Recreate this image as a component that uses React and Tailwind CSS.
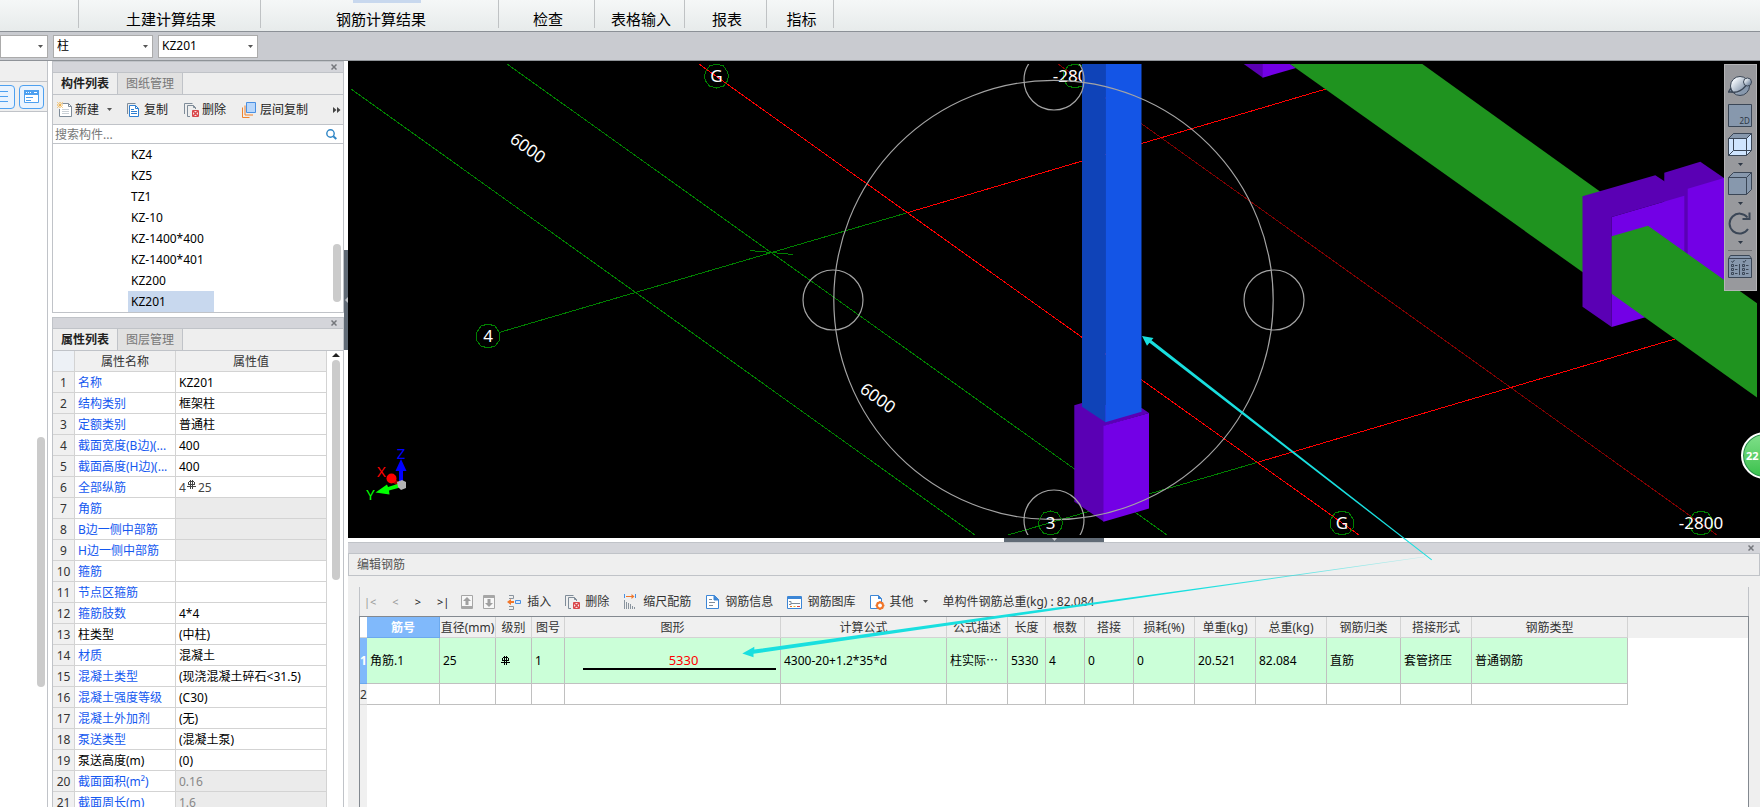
// Rebar takeoff workspace: ribbon, component/property panels, 3D view and rebar editor

const ribbonTabs = [
  { label: '土建计算结果', width: 'w-[182px]' },
  { label: '钢筋计算结果', width: 'w-[238px]', active: true },
  { label: '检查', width: 'w-24' },
  { label: '表格输入', width: 'w-[90px]' },
  { label: '报表', width: 'w-[82px]' },
  { label: '指标', width: 'w-[67px]' },
];

const components = ['KZ4', 'KZ5', 'TZ1', 'KZ-10', 'KZ-1400*400', 'KZ-1400*401', 'KZ200', 'KZ201'];

const properties = [
  { name: '名称', value: 'KZ201' },
  { name: '结构类别', value: '框架柱' },
  { name: '定额类别', value: '普通柱' },
  { name: '截面宽度(B边)(...', value: '400' },
  { name: '截面高度(H边)(...', value: '400' },
  { name: '全部纵筋', value: <span className="text-[#444]">4<RebarMark className="mx-px inline-block -translate-y-1" />25</span> },
  { name: '角筋', disabled: true },
  { name: 'B边一侧中部筋', disabled: true },
  { name: 'H边一侧中部筋', disabled: true },
  { name: '箍筋' },
  { name: '节点区箍筋' },
  { name: '箍筋肢数', value: '4*4' },
  { name: '柱类型', value: '(中柱)', plain: true },
  { name: '材质', value: '混凝土' },
  { name: '混凝土类型', value: '(现浇混凝土碎石<31.5)' },
  { name: '混凝土强度等级', value: '(C30)' },
  { name: '混凝土外加剂', value: '(无)' },
  { name: '泵送类型', value: '(混凝土泵)' },
  { name: '泵送高度(m)', value: '(0)', plain: true },
  { name: '截面面积(m²)', value: '0.16', disabled: true },
  { name: '截面周长(m)', value: '1.6', disabled: true },
];

const columns = [
  { title: '筋号', width: 'w-[73px]', value: '角筋.1', current: true },
  { title: '直径(mm)', width: 'w-14', value: '25' },
  { title: '级别', width: 'w-9', value: <RebarMark className="ml-0.5" /> },
  { title: '图号', width: 'w-[33px]', value: '1' },
  { title: '图形', width: 'w-[216px]', value: <BarShape length="5330" /> },
  { title: '计算公式', width: 'w-[166px]', value: '4300-20+1.2*35*d' },
  { title: '公式描述', width: 'w-[61px]', value: '柱实际⋯' },
  { title: '长度', width: 'w-[38px]', value: '5330' },
  { title: '根数', width: 'w-[39px]', value: '4' },
  { title: '搭接', width: 'w-[49px]', value: '0' },
  { title: '损耗(%)', width: 'w-[61px]', value: '0' },
  { title: '单重(kg)', width: 'w-[61px]', value: '20.521' },
  { title: '总重(kg)', width: 'w-[71px]', value: '82.084' },
  { title: '钢筋归类', width: 'w-[74px]', value: '直筋' },
  { title: '搭接形式', width: 'w-[71px]', value: '套管挤压' },
  { title: '钢筋类型', width: 'w-[156px]', value: '普通钢筋' },
];

function Caret({ className = '' }) {
  return (
    <svg width="5" height="3" viewBox="0 0 5 3" className={className} aria-hidden="true">
      <path d="M0 0h5L2.5 3z" fill="currentColor" />
    </svg>
  );
}

// HRB400 rebar grade sign
function RebarMark({ className = '' }) {
  return (
    <svg width="10" height="9" viewBox="0 0 10 9" fill="none" stroke="currentColor" className={className} aria-hidden="true">
      <path d="M2 1.5h5M1.500 2v3M7.500 2v3M2 4.500h5M3.500 0v9M5.500 0v9M0 6.500h9" />
    </svg>
  );
}

function BarShape({ length }) {
  return (
    <div className="pr-px pl-[15px] text-center text-[13px] leading-4 text-[#f00]">
      <span className="pl-2">{length}</span>
      <div className="h-0.5 bg-black" />
    </div>
  );
}

function NewIcon() {
  return (
    <svg width="16" height="16" viewBox="0 0 16 16" fill="none" aria-hidden="true">
      <path d="M5.5 1.5h6l3 3v10h-12V7" fill="#fff" stroke="#7f8c99" />
      <path d="M11.5 1.5v3h3" stroke="#7f8c99" />
      <path d="M5 7.5h7M5 9.5h7M5 11.5h7" stroke="#c9d0d6" />
      <path d="M3 0v6M0 3h6M.5.5l5 5M5.5.5l-5 5" stroke="#f5a623" strokeDasharray="1 .6" />
    </svg>
  );
}

function CopyIcon() {
  return (
    <svg width="16" height="16" viewBox="0 0 16 16" fill="none" stroke="#2f7fd1" aria-hidden="true">
      <path d="M1.5 12V1.5h8" stroke="#7f8c99" />
      <path d="M3.5 3.5h6l3 3v8h-9z" fill="#fff" />
      <path d="M9.5 3.500v3h3M5 7.500h3M5 9.500h6M5 11.500h6" />
    </svg>
  );
}

function DeleteIcon() {
  return (
    <svg width="16" height="16" viewBox="0 0 16 16" fill="none" stroke="#7f8c99" aria-hidden="true">
      <path d="M.5 12V1.5h8" />
      <path d="M6 14.5H3.5v-11h6l2 2V7" />
      <path d="M9.5 3.5v2h2" />
      <path d="M8.5 8.5h6v6h-6z" fill="#fbe3e3" stroke="#d9474b" />
      <path d="M9 9l5 5M14 9l-5 5" stroke="#d9474b" strokeWidth="1.5" />
    </svg>
  );
}

function LayerIcon() {
  return (
    <svg width="16" height="16" viewBox="0 0 16 16" fill="none" aria-hidden="true">
      <path d="M.5 5.5v10h7" stroke="#f0822d" />
      <path d="M3 3.5v9.500h8" stroke="#f0822d" />
      <path d="M4.500.5h9v10h-9z" fill="#b9d7fb" stroke="#4a90e2" />
    </svg>
  );
}

function InsertIcon() {
  return (
    <svg width="16" height="16" viewBox="0 0 16 16" fill="none" aria-hidden="true">
      <path d="M2 1.5h4.500v3H2M2 15.500h4.500v-3H2" stroke="#8a949e" />
      <path d="M0 8l4-3v2h3v2H4v2z" fill="#f0762b" />
      <path d="M8.500 6.500h5v3h-5z" stroke="#4a90e2" fill="#d9e9fb" />
    </svg>
  );
}

function ScaleIcon() {
  return (
    <svg width="16" height="16" viewBox="0 0 16 16" fill="none" aria-hidden="true">
      <path d="M1.5 0v4M12.5 0v4" stroke="#4a90e2" />
      <path d="M3 2.500h6" stroke="#f0762b" />
      <path d="M8.500 0l3 2.500-3 2.500z" fill="#f0762b" />
      <path d="M1.500 6v9M3.500 8v7M5.500 9v6M7.500 10v5M9.500 12v3M11.500 13v2" stroke="#8a949e" />
    </svg>
  );
}

function InfoIcon() {
  return (
    <svg width="16" height="16" viewBox="0 0 16 16" fill="none" stroke="#3c86d6" aria-hidden="true">
      <path d="M1.5 1.500h8l4 4v9h-12z" fill="#fff" />
      <path d="M9 1.500l4.500 4.500H9z" fill="#3c86d6" />
      <path d="M4 5.500h3M4 8.500h6M4 11.500h4" stroke="#7f8c99" />
    </svg>
  );
}

function LibraryIcon() {
  return (
    <svg width="16" height="16" viewBox="0 0 16 16" fill="none" aria-hidden="true">
      <path d="M.5 2.500h14v12H.5z" fill="#fff" stroke="#3c86d6" />
      <path d="M1 2h13v3H1z" fill="#3c86d6" />
      <path d="M2 7.500h2v3H2M4 9.500h9" stroke="#7f8c99" />
      <path d="M3 12.500h2" stroke="#f0762b" />
      <path d="M6.500 12.500h2" stroke="#e8b321" />
      <path d="M10 12.500h3" stroke="#d9474b" />
    </svg>
  );
}

function OtherIcon() {
  return (
    <svg width="16" height="16" viewBox="0 0 16 16" fill="none" aria-hidden="true">
      <path d="M1.500 1.500h8l3 3v10h-11z" fill="#fff" stroke="#3c86d6" />
      <path d="M9 1l4 4H9z" fill="#3c86d6" />
      <circle cx="11" cy="11.500" r="3" stroke="#f0762b" strokeWidth="2" fill="#fff" />
      <path d="M11 7v2M11 14v2M6.500 11.500h2M13.500 11.500h2M8 8.500l1.500 1.500M14 8.500l-1.500 1.500M8 14.500l1.500-1.500M14 14.500L12.500 13" stroke="#f0762b" strokeWidth="1.5" />
    </svg>
  );
}

function ArrowBoxIcon({ down = false }) {
  return (
    <svg width="12" height="14" viewBox="0 0 12 14" fill="none" className="block" aria-hidden="true">
      <path d="M.5.5h11v13H.5z" stroke="#a6a6a6" fill="#f7f7f7" />
      <path d={down ? 'M1 2h10' : 'M1 12h10'} stroke="#a6a6a6" strokeWidth="2" />
      <path d={down ? 'M6 12l4-4H7.500V4h-3v4H2z' : 'M6 2l4 4H7.500v4h-3V6H2z'} fill="#a0a0a0" />
    </svg>
  );
}

function ToolButton({ icon, label, menu = false, gap = 'gap-1' }) {
  return (
    <button type="button" className={`flex shrink-0 items-center whitespace-nowrap ${gap}`}>
      {icon}
      <span>{label}</span>
      {menu && <Caret className="ml-1.5 text-[#555]" />}
    </button>
  );
}

function Combo({ label, value, className = '' }) {
  return (
    <label className={`relative block h-[23px] ${className}`}>
      <select
        aria-label={label}
        defaultValue={value}
        className="block h-full w-full appearance-none border border-[#ababab] bg-white pl-[3px] text-xs text-black outline-none"
      >
        <option value={value}>{value}</option>
      </select>
      <Caret className="pointer-events-none absolute top-[10px] right-[5px] text-[#555]" />
    </label>
  );
}

function TitleBar() {
  return (
    <div className="flex h-3 shrink-0 items-center justify-end border-y border-[#c0c3c8] bg-[#d4d5da] pr-1.5">
      <button type="button" aria-label="关闭">
        <svg width="6" height="6" viewBox="0 0 6 6" stroke="#75777c" strokeWidth="1.500" className="block">
          <path d="M.5.5l5 5M5.500.5l-5 5" />
        </svg>
      </button>
    </div>
  );
}

function PanelTabs({ active, other }) {
  return (
    <div className="flex h-[22px] shrink-0 border-b border-[#c0c3c8] bg-[#eee]">
      <button type="button" className="w-[65px] border-r border-[#c0c3c8] font-bold text-[#222]">{active}</button>
      <button type="button" className="w-[65px] border-r border-[#c0c3c8] bg-[#e1e1e1] text-[#777]">{other}</button>
    </div>
  );
}

function LeftStrip() {
  return (
    <aside className="flex w-12 shrink-0 flex-col border-r border-[#c0c3c8] bg-white">
      <div className="h-[21px] shrink-0 border-b border-[#c0c3c8] bg-[#efefef]" />
      <div className="flex h-[30px] shrink-0 items-center justify-end gap-1 overflow-hidden border-b border-[#c0c3c8] bg-[#efefef] pr-[3px]">
        <button type="button" aria-label="列表" className="flex h-6 w-[25px] shrink-0 items-center justify-center rounded border border-[#4da0f0] bg-[#e9f3fe]">
          <svg width="15" height="13" viewBox="0 0 15 13" stroke="#4da0f0">
            <path d="M0 1.500h13M0 6.500h13M0 11.500h13" />
          </svg>
        </button>
        <button type="button" aria-label="窗口" className="flex h-6 w-[25px] shrink-0 items-center justify-center rounded border border-[#4da0f0] bg-[#e9f3fe]">
          <svg width="15" height="13" viewBox="0 0 15 13" fill="none" stroke="#4da0f0">
            <path d="M.5.5h14v12H.5z" fill="#fff" />
            <path d="M0 2.500h15" strokeWidth="5" />
            <path d="M2 2.500h1M4 2.500h1M6 2.500h1M10 2.500h3" stroke="#fff" />
            <path d="M2 7.500h7M2 10.500h5" />
          </svg>
        </button>
      </div>
      <div className="flex flex-1 justify-end pt-[325px] pr-0.5">
        <div className="h-[250px] w-2 rounded bg-[#cbcbcb]" />
      </div>
    </aside>
  );
}

function ComponentPanel() {
  return (
    <section className="flex shrink-0 flex-col border-x border-b border-[#c0c3c8] bg-white">
      <TitleBar />
      <PanelTabs active="构件列表" other="图纸管理" />
      <div className="flex h-[30px] items-center gap-4 border-b border-[#c0c3c8] bg-[#eee] pl-1 text-[#222]">
        <div className="-mr-0.5">
          <ToolButton icon={<NewIcon />} label="新建" menu gap="gap-0.5" />
        </div>
        <ToolButton icon={<CopyIcon />} label="复制" gap="gap-0.5" />
        <ToolButton icon={<DeleteIcon />} label="删除" gap="gap-0.5" />
        <ToolButton icon={<LayerIcon />} label="层间复制" gap="gap-0.5" />
        <button type="button" aria-label="更多" className="mr-0.5 ml-auto">
          <svg width="8" height="6" viewBox="0 0 8 6" fill="#444" className="block">
            <path d="M0 0l3.500 3L0 6zM4 0l3.500 3L4 6z" />
          </svg>
        </button>
      </div>
      <div className="flex h-[19px] items-center border-b border-[#c0c3c8]">
        <input
          type="text"
          aria-label="搜索构件"
          placeholder="搜索构件..."
          className="h-full min-w-0 flex-1 pl-0.5 outline-none placeholder:text-[#777]"
        />
        <button type="button" aria-label="搜索" className="mr-1.5">
          <svg width="11" height="11" viewBox="0 0 11 11" fill="none" stroke="#2f86c6" className="block">
            <circle cx="4.500" cy="4.500" r="3.700" strokeWidth="1.400" />
            <path d="M7.300 7.300L10.300 10" strokeWidth="2" />
          </svg>
        </button>
      </div>
      <div className="flex justify-between">
        <ul className="pl-[75px]">
          {components.map((name) => (
            <li
              key={name}
              className={`flex h-[21px] w-[86px] items-center pl-[3px] ${name === 'KZ201' ? 'bg-[#c8d8ee]' : ''}`}
            >
              {name}
            </li>
          ))}
        </ul>
        <div className="flex flex-col justify-end pr-0.5 pb-2.5">
          <div className="h-[58px] w-2 rounded bg-[#cbcbcb]" />
        </div>
      </div>
    </section>
  );
}

function PropertyPanel() {
  return (
    <section className="flex min-h-0 flex-1 flex-col border-x border-[#c0c3c8] bg-white">
      <TitleBar />
      <PanelTabs active="属性列表" other="图层管理" />
      <div className="flex min-h-0 flex-1 overflow-hidden">
        <div className="min-w-0 flex-1">
          <table className="w-full table-fixed border-separate border-spacing-0">
            <thead>
              <tr className="h-[21px] bg-[#f0f0f0] text-[#333]">
                <th className="w-[22px] border-r border-b border-[#d3d3d3] bg-[#edf1f6]" />
                <th className="w-[101px] border-r border-b border-[#d3d3d3] p-0 pt-0.5 font-normal">属性名称</th>
                <th className="border-r border-b border-[#d3d3d3] p-0 pt-0.5 font-normal">属性值</th>
              </tr>
            </thead>
            <tbody>
              {properties.map((row, index) => (
                <tr key={row.name} className="h-[21px] whitespace-nowrap">
                  <td className="border-r border-b border-[#d3d3d3] bg-[#f0f0f0] p-0 pt-0.5 text-center text-[#333]">{index + 1}</td>
                  <td className={`overflow-hidden border-r border-b border-[#d3d3d3] p-0 pt-0.5 pl-[3px] ${row.plain ? 'text-black' : 'text-[#1458f0]'}`}>
                    {row.name}
                  </td>
                  <td className={`overflow-hidden border-r border-b border-[#d3d3d3] p-0 pt-0.5 pl-[3px] ${row.disabled ? 'bg-[#ebebeb] text-[#888]' : 'text-black'}`}>
                    {row.value}
                  </td>
                </tr>
              ))}
            </tbody>
          </table>
        </div>
        <div className="flex w-4 shrink-0 flex-col items-center pt-0.5 pl-px">
          <svg width="8" height="4" viewBox="0 0 8 4" className="block" aria-hidden="true">
            <path d="M0 4l4-4 4 4z" fill="#222" />
          </svg>
          <div className="mt-[3px] h-[220px] w-2 rounded bg-[#cbcbcb]" />
        </div>
      </div>
    </section>
  );
}

function AxisBubble({ x, y, label }) {
  return (
    <g>
      <polygon
        points="0,-12 7,-10 11,-4 12,0 11,5 7,10 0,12 -7,10 -11,5 -12,0 -11,-4 -7,-10"
        transform={`translate(${x} ${y})`}
        fill="none"
        stroke="#008000"
        shapeRendering="crispEdges"
      />
      <text x={x} y={y + 6} fill="#fff" fontSize="17" textAnchor="middle">{label}</text>
    </g>
  );
}

function Scene() {
  return (
    <svg
      viewBox="348 61 1412 477"
      preserveAspectRatio="xMidYMid slice"
      className="absolute inset-0 h-full w-full"
      role="img"
      aria-label="三维视图"
    >
      <defs>
        <clipPath id="scene">
          <rect x="351" y="64" width="1406" height="471" />
        </clipPath>
      </defs>
      <g clipPath="url(#scene)">
        {/* grid axes */}
        <g stroke="#008000" fill="none" shapeRendering="crispEdges">
          <path d="M351 89L975 535M507 64L1167 535" />
          <path d="M499 332.500L908 212.500M1008 535L1257 462.500M750 250.500L793 254.500" />
        </g>
        <g stroke="#f00" fill="none" shapeRendering="crispEdges">
          <path d="M1058 64L1717 535" stroke="#800000" />
          <path d="M699 64L1359 535M908 212.500L1326 89M1257 462.500L1675 339" />
        </g>
        <AxisBubble x={716.5} y={76} label="G" />
        <AxisBubble x={1075} y={76} label="-2800" />
        <AxisBubble x={488} y={336} label="4" />
        <AxisBubble x={1342} y={523} label="G" />
        <AxisBubble x={1701} y={523} label="-2800" />
        <text transform="translate(528 148) rotate(36)" y="6" fill="#fff" fontSize="17" textAnchor="middle">6000</text>
        <text transform="translate(878 398) rotate(36)" y="6" fill="#fff" fontSize="17" textAnchor="middle">6000</text>

        {/* selected column on its pedestal */}
        <polygon points="1074.300,405.300 1082,403 1141.700,408 1149,413 1104,426 1104,521.700 1074.300,501.700" fill="#5a00b4" />
        <polygon points="1103.500,425.700 1149,413 1149,508.500 1103.500,521.700" fill="#7300e6" />
        <polygon points="1082,64 1105.500,64 1105.500,422.300 1082,406.700" fill="#0f43b8" />
        <polygon points="1105.300,64 1141.500,64 1141.500,411.700 1105.300,422.300" fill="#1455e6" />

        {/* beams and corner columns */}
        <polygon points="1243.700,64 1263,64 1263,77.700" fill="#5a00b4" />
        <polygon points="1262.700,64 1290,64 1296,68 1262.700,77.700" fill="#7300e6" />
        <polygon points="1290,64 1422.300,64 1600,191.500 1600,284.500" fill="#1f931f" />
        <polygon points="1664.300,172.700 1700.300,161.700 1724,178 1724,290 1664,260" fill="#5a00b4" />
        <polygon points="1687.700,188.700 1724,178 1724,290 1687.700,262" fill="#7300e6" />
        <polygon points="1582.500,196.300 1655.300,175.300 1663.700,180.700 1684.300,195.700 1611.700,217 1611.700,327 1582.500,306.700" fill="#5a00b4" />
        <polygon points="1611.700,217 1684.300,195.700 1684.300,306 1611.700,327" fill="#7300e6" />
        <polygon points="1611.700,236.300 1648,225.700 1757,303.300 1757,397.500 1611.700,293.700" fill="#1f931f" />

        {/* orbit handle */}
        <g stroke="#a4a4a4" strokeWidth="1.200" fill="none">
          <circle cx="1053.500" cy="300" r="219.700" />
          <circle cx="833" cy="300" r="30" />
          <circle cx="1274" cy="300" r="30" />
          <circle cx="1054" cy="80" r="30" />
          <circle cx="1054" cy="520" r="30" />
        </g>
        <AxisBubble x={1050.5} y={523} label="3" />

        {/* orientation gizmo */}
        <g fontSize="15" textAnchor="middle">
          <path d="M399 467h4v15h-4zM401 459l5.500 12h-11z" fill="#00f" />
          <path d="M390 476l12 8-2 3-12-7z" fill="#a00000" />
          <circle cx="391.500" cy="478.500" r="5" fill="#f00" />
          <path d="M375.500 492.500L387 484.500l1 2.500 11-3.500 1 4-11 3 .5 4z" fill="#0f0" />
          <path d="M397 482l5-2 4 2v6l-5 2-3-3z" fill="#b4b4b4" />
          <text x="401" y="459" fill="#00f">Z</text>
          <text x="381.500" y="477" fill="#f00">X</text>
          <text x="370.500" y="499.500" fill="#0f0">Y</text>
        </g>
      </g>
    </svg>
  );
}

function ViewButton({ label, menu = false, children }) {
  return (
    <button type="button" aria-label={label} className="flex flex-col items-center">
      <svg width="24" height="24" viewBox="0 0 24 24" fill="none" stroke="#3a4656" className="block">
        {children}
      </svg>
      {menu && <Caret className="my-[6px] text-[#2d3745]" />}
    </button>
  );
}

function ViewToolbar() {
  return (
    <div className="absolute top-[3px] right-[3px] flex h-[227px] w-[33px] flex-col items-center border border-[#b4b4b6] bg-[#98999d] pt-[9px] pr-px">
      <ViewButton label="动态观察">
        <defs>
          <linearGradient id="globe" x1="0" y1="0" x2="1" y2="1">
            <stop offset="0.2" stopColor="#eef3f8" />
            <stop offset="0.7" stopColor="#8798ad" />
          </linearGradient>
        </defs>
        <circle cx="12" cy="12" r="9.500" fill="url(#globe)" />
        <path d="M2 17c6 4 15-2 18-9" strokeWidth="1.500" />
        <path d="M.5 18l2-3.500 2 3.500z" fill="#8798ad" strokeWidth="1.300" />
        <circle cx="19.500" cy="8" r="4" fill="url(#globe)" />
      </ViewButton>
      <div className="mt-1.5">
        <ViewButton label="二维">
          <path d="M.5.5h23v22H.5z" fill="#8798ad" />
          <text x="11.500" y="20" fontSize="8" fill="#2d3745" stroke="none">2D</text>
        </ViewButton>
      </div>
      <div className="mt-[5px]">
        <ViewButton label="线框" menu>
          <path d="M.5 5.500l5-5h18v17l-5 5H.5z" fill="#cfe5ff" />
          <path d="M.5 5.500l5-5h18l-5 5z" fill="#8798ad" />
          <path d="M18.500 5.500v17M5.500 5.500v12h18M.5 22.500l5-5M.5 5.500h18" />
        </ViewButton>
      </div>
      <ViewButton label="实体" menu>
        <path d="M.5 5.500l5-5h18v17l-5 5H.5z" fill="#8798ad" />
        <path d="M.5 5.500h18v17M18.500 5.500l5-5" />
      </ViewButton>
      <ViewButton label="旋转" menu>
        <path d="M19.500 6.500A10 10 0 1 0 20 18" strokeWidth="2" />
        <path d="M21.500 1.500v6.500h-7" strokeWidth="2" />
      </ViewButton>
      <div className="h-px w-6 shrink-0 bg-[#6f7075]" />
      <div className="mt-1">
        <ViewButton label="显示设置">
          <path d="M.5 3.500l2-3h19l2 3v19H.5z" fill="#8798ad" />
          <path d="M.5 3.500h23M11.500 9v11" />
          <path d="M3.500 6l1 1.500 2-2.500M15 6l1 1.500 2-2.500" />
          <path d="M3.500 9.500h2v2h-2zM3.500 13.500h2v2h-2zM3.500 17.500h2v2h-2zM14.500 9.500h2v2h-2zM14.500 13.500h2v2h-2zM14.500 17.500h2v2h-2z" />
          <path d="M7 10.500h3M7 14.500h3M7 18.500h3M18 10.500h3M18 14.500h3M18 18.500h3" strokeDasharray="2 .5" />
        </ViewButton>
      </div>
    </div>
  );
}

function RebarEditor() {
  return (
    <section className="flex h-[265px] shrink-0 flex-col bg-[#efefef]">
      <TitleBar />
      <h2 className="flex h-[22px] shrink-0 items-center border-r border-b border-l border-[#c0c3c8] pl-2 text-[#555]">编辑钢筋</h2>
      <div className="flex min-h-0 flex-1 flex-col px-[11px] pt-[11px]">
        <div className="flex h-[29px] shrink-0 items-center gap-3.5 border-x border-[#c0c3c8] pl-1 text-[#333]">
          <div className="flex items-center gap-4 text-[11px]">
            <button type="button" className="text-[#999]">|&lt;</button>
            <button type="button" className="text-[#999]">&lt;</button>
            <button type="button" className="text-[#222]">&gt;</button>
            <button type="button" className="text-[#222]">&gt;|</button>
          </div>
          <div className="-mx-0.5 flex items-center gap-2.5">
            <button type="button" aria-label="上移"><ArrowBoxIcon /></button>
            <button type="button" aria-label="下移"><ArrowBoxIcon down /></button>
          </div>
          <ToolButton icon={<InsertIcon />} label="插入" />
          <ToolButton icon={<DeleteIcon />} label="删除" />
          <ToolButton icon={<ScaleIcon />} label="缩尺配筋" />
          <ToolButton icon={<InfoIcon />} label="钢筋信息" />
          <ToolButton icon={<LibraryIcon />} label="钢筋图库" />
          <ToolButton icon={<OtherIcon />} label="其他" menu />
          <span className="whitespace-nowrap">单构件钢筋总重(kg) : 82.084</span>
        </div>
        <div className="min-h-0 flex-1 overflow-hidden border-x border-t border-[#838990] bg-[linear-gradient(to_right,#f0f0f0_7px,#fff_7px)]">
          <table className="w-full table-fixed border-separate border-spacing-0 whitespace-nowrap">
            <thead>
              <tr className="h-[21px] bg-[#f0f0f0] text-[#333]">
                <th className="w-[7px] border-b border-[#d3d3d3] bg-white p-0" />
                {columns.map((col) => (
                  <th
                    key={col.title}
                    className={`border-r border-b p-0 pt-0.5 ${col.width} ${col.current ? 'border-[#6ba9ee] bg-[#80b9fb] font-bold text-white' : 'border-[#d3d3d3] font-normal'}`}
                  >
                    {col.title}
                  </th>
                ))}
                <th className="p-0" />
              </tr>
            </thead>
            <tbody>
              <tr className="h-[46px] text-black">
                <td className="overflow-hidden border-b border-[#6ba9ee] bg-[#80b9fb] p-0 font-bold text-white">1</td>
                {columns.map((col) => (
                  <td key={col.title} className="overflow-hidden border-r border-b border-[#c0c0c0] bg-[#cbffd8] px-[3px] py-0">
                    {col.value}
                  </td>
                ))}
                <td className="p-0" />
              </tr>
              <tr className="h-[21px]">
                <td className="overflow-hidden border-b border-[#d3d3d3] bg-[#f0f0f0] p-0 pt-0.5 text-[#333]">2</td>
                {columns.map((col) => (
                  <td key={col.title} className="border-r border-b border-[#c0c0c0] bg-white p-0" />
                ))}
                <td className="p-0" />
              </tr>
            </tbody>
          </table>
        </div>
      </div>
    </section>
  );
}

// Arrows linking the bar row with the column in the view
function Callouts() {
  return (
    <svg viewBox="348 61 1412 746" className="pointer-events-none absolute inset-0 h-full w-full" aria-hidden="true">
      <defs>
        <linearGradient id="fade" gradientUnits="userSpaceOnUse" x1="1200" y1="0" x2="1425" y2="0">
          <stop offset="0" stopColor="#19dfdf" />
          <stop offset="1" stopColor="#19dfdf" stopOpacity="0.2" />
        </linearGradient>
      </defs>
      <path d="M1142 336l11.500 2-2 2.300L1432 559.500l-.5.700L1149.500 342.800l-2.500 3z" fill="#19dfdf" />
      <path d="M742.300 653.500l12-6.700v2.700L1000 615.300 1200 588 1425 556.500v.6L1200 589.200 1000 618 753.500 653.800v3.400z" fill="url(#fade)" />
    </svg>
  );
}

export default function App() {
  return (
    <div className="flex h-screen flex-col overflow-hidden bg-white font-['Noto_Sans','Noto_Sans_CJK_SC',sans-serif] text-xs leading-4 text-black">
      <nav className="flex h-8 shrink-0 items-start border-b border-[#8b9096] bg-linear-to-b from-[#f5f7f7] to-[#e7ebeb]">
        <div className="h-7 w-[79px] shrink-0 border-r border-[#bfc2c4]" />
        {ribbonTabs.map((tab) => (
          <button
            key={tab.label}
            type="button"
            className={`relative flex h-7 shrink-0 items-end justify-center border-r border-[#bfc2c4] pl-[3px] text-[15px] leading-[18px] ${tab.width}`}
          >
            {tab.active && <span className="absolute top-0 right-[77px] h-[3px] w-[68px] bg-[#c8d8ee]" />}
            {tab.label}
          </button>
        ))}
      </nav>

      <div className="flex h-[29px] shrink-0 items-center gap-[5px] border-b border-[#8f9398] bg-[#c9cbd0]">
        <Combo label="楼层" value="" className="w-12" />
        <Combo label="构件类型" value="柱" className="w-[100px]" />
        <Combo label="构件" value="KZ201" className="w-[100px]" />
      </div>

      <div className="flex min-h-0 flex-1">
        <LeftStrip />
        <div className="ml-1 flex w-[292px] shrink-0 flex-col gap-1">
          <ComponentPanel />
          <PropertyPanel />
        </div>
        <div className="w-1 shrink-0 pt-[189px]">
          <div className="flex h-[100px] items-center bg-[#616b76]">
            <svg width="4" height="6" viewBox="0 0 4 6" aria-hidden="true">
              <path d="M4 0v6L1 3z" fill="#c0c3c8" />
            </svg>
          </div>
        </div>
        <main className="relative flex min-w-0 flex-1 flex-col">
          <div className="relative min-h-0 flex-1 overflow-hidden bg-black">
            <Scene />
            <ViewToolbar />
            <div className="absolute right-[-28px] bottom-[59px] flex h-[47px] w-[47px] items-center rounded-full border-2 border-white bg-linear-to-b from-[#7fe08a] to-[#35c04a] pl-[3px] text-[11px] font-bold text-white ring-1 ring-[#2b8a50] ring-inset">
              22
            </div>
          </div>
          <div className="flex h-1 shrink-0 justify-center">
            <div className="flex w-[100px] justify-center bg-[#616b76]">
              <Caret className="text-[#c0c3c8]" />
            </div>
          </div>
          <RebarEditor />
          <Callouts />
        </main>
      </div>
    </div>
  );
}
